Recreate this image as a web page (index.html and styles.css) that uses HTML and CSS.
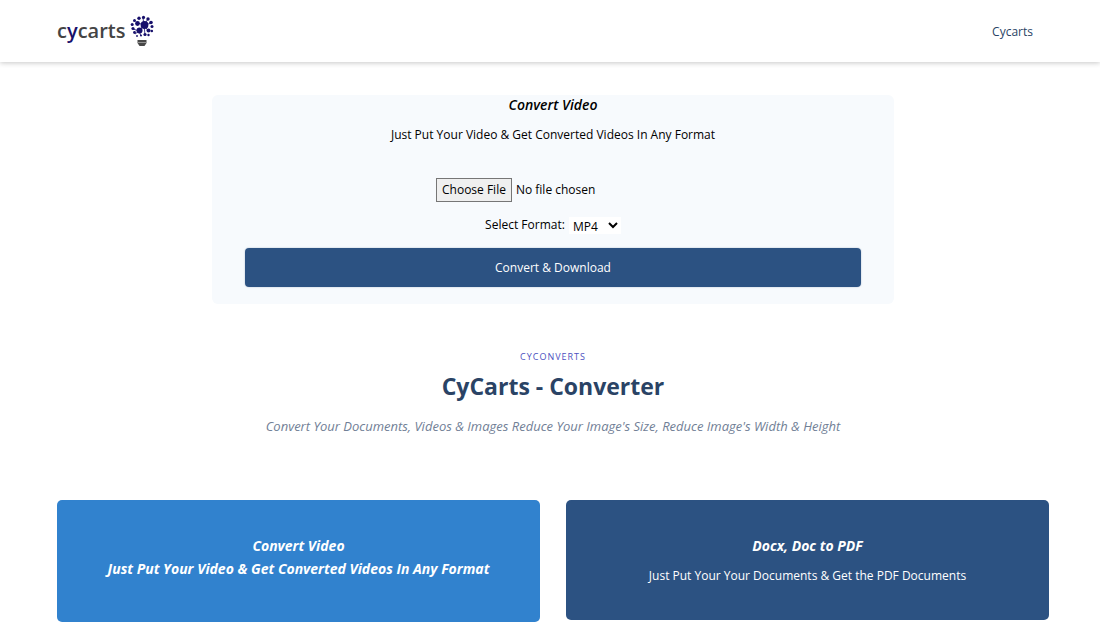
FILE: index.html
```html
<!DOCTYPE html>
<html lang="en">
<head>
<meta charset="utf-8">
<meta name="viewport" content="width=device-width, initial-scale=1">
<title>CyCarts - Converter</title>
<link rel="stylesheet" href="styles.css">
</head>
<body>
<header class="site-header">
  <a class="brand" href="#">
    <span class="brand-name">c<span class="brand-accent">y</span>carts</span>
    <svg class="brand-icon" viewBox="0 0 24 32" aria-hidden="true">
      <g stroke="#17106b" stroke-width="0.8" fill="none">
        <path d="M14 10 9 16M14 10 8 8M14 10 13 3M14 10 18 4M14 10 22 8M14 10 19 17M9 16 3 14M9 16 5 19M9 16 11 21M14 10 15 20"/>
      </g>
      <g fill="#17106b">
        <circle cx="14.500" cy="10" r="3.900"/>
        <circle cx="9.500" cy="15.500" r="3"/>
        <circle cx="7.500" cy="8.500" r="2.400"/>
        <circle cx="9" cy="3.200" r="1.700"/>
        <circle cx="13.500" cy="2.400" r="1.600"/>
        <circle cx="18" cy="4" r="1.700"/>
        <circle cx="4.500" cy="5.500" r="1.500"/>
        <circle cx="21" cy="7.500" r="1.800"/>
        <circle cx="22" cy="11.500" r="1.500"/>
        <circle cx="2.200" cy="9.500" r="1.500"/>
        <circle cx="3" cy="13.500" r="1.600"/>
        <circle cx="4.500" cy="17.500" r="1.400"/>
        <circle cx="18.500" cy="15.500" r="2"/>
        <circle cx="21.800" cy="16" r="1.300"/>
        <circle cx="15" cy="19.500" r="1.600"/>
        <circle cx="18.500" cy="20" r="1.200"/>
        <circle cx="11" cy="20.500" r="1"/>
        <circle cx="7" cy="21" r="0.900"/>
      </g>
      <path d="M7.500 25h9v3l-2 3h-5l-2-3z" fill="#484848"/>
      <path d="M8 27.500h8" stroke="#b5b5b5" stroke-width="0.700"/>
    </svg>
  </a>
  <nav class="site-nav"><a class="nav-link" href="#">Cycarts</a></nav>
</header>
<main class="page">
  <form class="converter">
    <h2 class="converter-title">Convert Video</h2>
    <p class="converter-text">Just Put Your Video &amp; Get Converted Videos In Any Format</p>
    <input class="file-input" type="file" aria-label="Video file">
    <div class="format-row">
      <label for="format">Select Format:</label>
      <select class="format-select" id="format">
        <option>MP4</option>
        <option>AVI</option>
        <option>MOV</option>
      </select>
    </div>
    <button class="submit-button" type="button">Convert &amp; Download</button>
  </form>
  <section class="intro">
    <p class="eyebrow">CYCONVERTS</p>
    <h1 class="intro-title">CyCarts - Converter</h1>
    <p class="intro-text">Convert Your Documents, Videos &amp; Images Reduce Your Image's Size, Reduce Image's Width &amp; Height</p>
  </section>
  <section class="tools">
    <a class="tool tool-active" href="#">
      <h3 class="tool-title">Convert Video</h3>
      <p class="tool-strong">Just Put Your Video &amp; Get Converted Videos In Any Format</p>
    </a>
    <a class="tool" href="#">
      <h3 class="tool-title">Docx, Doc to PDF</h3>
      <p class="tool-text">Just Put Your Your Documents &amp; Get the PDF Documents</p>
    </a>
  </section>
</main>
</body>
</html>
```
FILE: styles.css
```css
* { box-sizing: border-box; }

body, h1, h2, h3, p { margin: 0; }

body {
  background: #fff;
  color: #000;
  font: 12px/20px "Segoe UI", "Open Sans", sans-serif;
}

a { color: inherit; text-decoration: none; }

.site-header {
  display: flex;
  align-items: center;
  justify-content: space-between;
  height: 62px;
  padding: 0 51px 0 57px;
  box-shadow: 0 1px 5px rgba(0, 0, 0, 0.22);
}

.brand { display: flex; align-items: center; gap: 5px; }

.brand-name {
  color: #444;
  font-size: 20px;
  line-height: 32px;
  font-weight: 600;
}

.brand-accent { color: #17106b; }

.brand-icon { width: 24px; height: 32px; }

.site-nav { padding: 2px 16px 0; }

.nav-link { color: #2a4365; }

.page { padding: 33px 51px 16px 57px; }

.converter {
  display: flex;
  flex-direction: column;
  align-items: center;
  max-width: 682px;
  margin: 0 auto;
  padding: 0 33px 17px;
  border-radius: 6px;
  background: #f7fafd;
}

.converter-title {
  font-size: 14px;
  line-height: 20px;
  font-style: italic;
  font-weight: 600;
}

.converter-text { margin-top: 10px; }

.file-input {
  width: 234px;
  margin-top: 33px;
  font: inherit;
}

.file-input::file-selector-button {
  height: 24px;
  padding: 0 5px;
  border: 1px solid #767676;
  border-radius: 0;
  background: #efefef;
  color: #000;
  font: inherit;
}

.format-row {
  display: flex;
  align-items: center;
  gap: 4px;
  margin-top: 13px;
}

.format-select {
  width: 52px;
  height: 17px;
  border: 0;
  padding: 0;
  background: #fff;
  color: #000;
  font: inherit;
}

.submit-button {
  width: 100%;
  height: 39px;
  margin-top: 13px;
  border: 0;
  border-radius: 4px;
  background: #2c5282;
  box-shadow: 0 0 1px 1px #e2e8f0;
  color: #fff;
  font: inherit;
}

.intro { margin-top: 45px; text-align: center; }

.eyebrow {
  color: #4c51bf;
  font-size: 9px;
  line-height: 16px;
  letter-spacing: 1px;
}

.intro-title {
  margin-top: 5px;
  color: #2a4365;
  font-size: 23px;
  line-height: 32px;
  font-weight: 700;
}

.intro-text {
  margin-top: 14px;
  color: #718096;
  font-size: 13px;
  font-style: italic;
}

.tools {
  display: grid;
  grid-template-columns: 1fr 1fr;
  align-items: start;
  gap: 26px;
  margin-top: 64px;
}

.tool {
  padding: 34px 16px;
  border-radius: 5px;
  background: #2c5282;
  color: #fff;
  text-align: center;
}

.tool-active { padding-bottom: 42px; background: #3182ce; }

.tool-title, .tool-strong {
  font-size: 14px;
  line-height: 23px;
  font-style: italic;
  font-weight: 700;
}

.tool-text { margin-top: 9px; }
```
